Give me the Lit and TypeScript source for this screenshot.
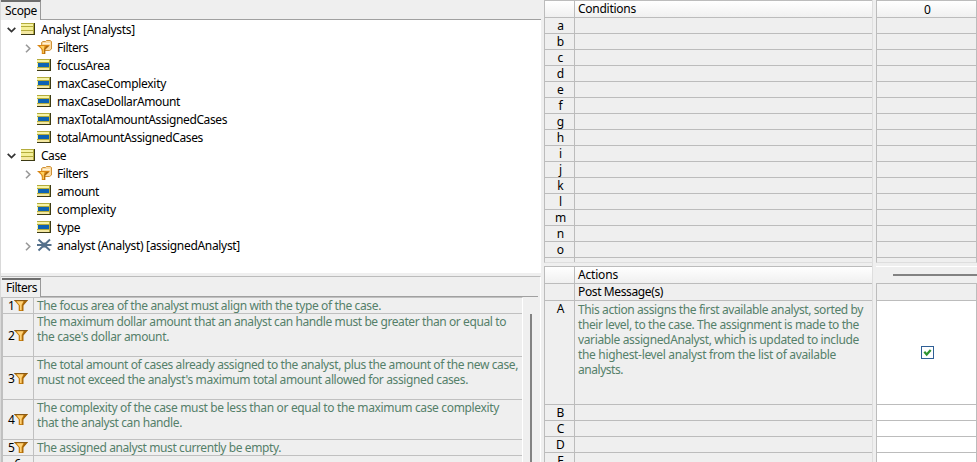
import { LitElement, html, css, svg } from "lit";
import { customElement } from "lit/decorators.js";

type Kind = "entity" | "folder" | "attr" | "assoc";
interface Node { label: string; kind: Kind; level: number; state?: "open" | "closed"; w: number }

const TREE: Node[] = [
  { label: "Analyst [Analysts]", kind: "entity", level: 0, state: "open", w: 94 },
  { label: "Filters", kind: "folder", level: 1, state: "closed", w: 31 },
  { label: "focusArea", kind: "attr", level: 1, w: 53 },
  { label: "maxCaseComplexity", kind: "attr", level: 1, w: 109 },
  { label: "maxCaseDollarAmount", kind: "attr", level: 1, w: 123 },
  { label: "maxTotalAmountAssignedCases", kind: "attr", level: 1, w: 170 },
  { label: "totalAmountAssignedCases", kind: "attr", level: 1, w: 146 },
  { label: "Case", kind: "entity", level: 0, state: "open", w: 25 },
  { label: "Filters", kind: "folder", level: 1, state: "closed", w: 31 },
  { label: "amount", kind: "attr", level: 1, w: 42 },
  { label: "complexity", kind: "attr", level: 1, w: 59 },
  { label: "type", kind: "attr", level: 1, w: 23 },
  { label: "analyst (Analyst) [assignedAnalyst]", kind: "assoc", level: 1, state: "closed", w: 183 },
];

type Line = [string, number];
const FILTERS: { h: number; lines: Line[] }[] = [
  { h: 16, lines: [["The focus area of the analyst must align with the type of the case.", 344]] },
  { h: 43, lines: [["The maximum dollar amount that an analyst can handle must be greater than or equal to", 469], ["the case's dollar amount.", 132]] },
  { h: 43, lines: [["The total amount of cases already assigned to the analyst, plus the amount of the new case,", 481], ["must not exceed the analyst's maximum total amount allowed for assigned cases.", 431]] },
  { h: 40, lines: [["The complexity of the case must be less than or equal to the maximum case complexity", 462], ["that the analyst can handle.", 145]] },
  { h: 16, lines: [["The assigned analyst must currently be empty.", 244]] },
];

const ACTION: Line[] = [
  ["This action assigns the first available analyst, sorted by", 285],
  ["their level, to the case. The assignment is made to the", 281],
  ["variable assignedAnalyst, which is updated to include", 281],
  ["the highest-level analyst from the list of available", 258],
  ["analysts.", 45],
];

const fit = (label: string, w: number) => html`<span class="fit" data-width=${w}>${label}</span>`;

const funnel = svg`
  <path d="M0 0H14L9.3 5.5V11H4.7V5.5Z" fill="#c9800f"/>
  <path d="M0 0H14L13 1.2H1Z" fill="#8a5a14"/>
  <path d="M2.5 1.2H9.5L7.6 5V10H6V5.5Z" fill="#ffd278"/>
  <path d="M10.5 1.2H13L9.3 5.5V11H8.3V5Z" fill="#a3650c"/>`;

@customElement("tree-icon")
class TreeIcon extends LitElement {
  static properties = { kind: { type: String } };
  declare kind: Kind;
  static styles = css`:host { display: block; width: 16px; height: 16px; } svg { display: block; }`;
  render() {
    const box = this.kind === "attr" || this.kind === "entity";
    const body = this.kind === "folder"
      ? svg`<path d="M4.5 3.5L6 2.5H8.5L9.5 1.5H13L14.5 2.5V10L12.5 11.5H5Z" fill="#fbd9a0" stroke="#cf9238"/>
          <path d="M6 4.5H13" stroke="#fff3d6"/>
          <path d="M0 6H13L8.2 10.5V15H4.8V10.5Z" fill="#d98512"/>
          <path d="M3 7H7.5L6.8 10.5V14H5.8V10.5Z" fill="#ffd060"/>
          <path d="M9.5 7H12L8.2 10.5V15H7.3V10Z" fill="#a8660c"/>`
      : this.kind === "assoc"
      ? svg`<path d="M1.5 2.5L13 13.5M13 2.5L1.5 13.5M0 8H14.5" stroke="#55718c" stroke-width="1.9" fill="none"/><circle cx="7.3" cy="8" r="2.6" fill="#55718c"/>`
      : svg`<rect x="0" y="2" width="14" height="12" fill="#3c3a14"/>
          <rect x="0" y="2" width="13" height="11" fill="#b4ac3c"/>
          <rect x="0" y="3" width="12" height="2" fill="#f6f3a6"/>
          ${this.kind === "attr"
            ? svg`<rect x="0" y="6" width="12" height="4" fill="#f6f3a6"/><rect x="1" y="6" width="11" height="4" fill="#0c62b4"/><rect x="0" y="11" width="12" height="2" fill="#f4e8a2"/>`
            : svg`<rect x="0" y="6" width="12" height="3" fill="#f4ef98"/><rect x="0" y="10" width="12" height="3" fill="#f4e8a2"/>`}`;
    return html`<svg width="16" height="16" shape-rendering=${box ? "crispEdges" : "auto"}>${body}</svg>`;
  }
}

@customElement("app-root")
class AppRoot extends LitElement {
  static styles = css`
    :host { display: grid; grid-template-columns: 544px 332px 101px; width: 977px; height: 462px; overflow: hidden;
      background: #efefef; font: 12px/15px "Noto Sans", "Open Sans", sans-serif; color: #000; }
    * { box-sizing: border-box; }
    .fit { display: inline-block; white-space: pre; }
    .left { display: grid; grid-template-rows: 20px 253px 3px 186px; border-left: 1px solid #d9d9d9; width: 541px; height: 462px; overflow: hidden; }
    .tabs { display: flex; height: 20px; }
    .tab { width: 40px; height: 20px; border-top: 2px solid #6e6e6e; border-right: 1px solid #999; padding: 1px 0 0 4px; }
    .rest { flex: 1; border-bottom: 1px solid #a0a0a0; }
    .tree { background: #fff; }
    .node { display: flex; height: 18px; align-items: center; }
    .node .arrow { width: 20px; display: flex; justify-content: center; padding: 2px 0 0 1px; }
    .node.child { padding-left: 16px; }
    .node tree-icon { width: 20px; }
    .filters { border-top: 1px solid #bcbcbc; border-right: 1px solid #fff; padding-top: 1px; overflow: hidden; }
    .filters .tabs { height: 19px; }
    .filters .tab { height: 19px; margin-left: 1px; width: 39px; padding: 0 0 0 4px; }
    .filters .rest { margin-right: 2px; }
    .body { display: flex; }
    .list { width: 522px; border-left: 2px solid #c0c0c0; border-right: 1px solid #fff; height: 165px; overflow: hidden; border-top: 1px solid #c0c0c0; }
    .frow { display: flex; border-bottom: 1px solid #c0c0c0; }
    .num { width: 31px; border-right: 1px solid #c0c0c0; display: flex; align-items: center; padding-left: 5px; }
    .num span { width: 6px; }
    .txt { padding: 1px 0 0 3px; color: #55806a; line-height: 15px; white-space: nowrap; }
    .frow .txt { margin-top: -1px; }
    .line { display: block; height: 15px; }
    .thumb { width: 2px; background: #828282; margin: 17px 0 0 7px; height: 150px; }
    .mid, .right { display: grid; grid-template-rows: 263px 3px 196px; height: 462px; overflow: hidden; }
    .mid { width: 329px; border-right: 1px solid #dedede; }
    .pane { border-top: 1px solid #bcbcbc; border-left: 1px solid #bcbcbc; overflow: hidden; }
    .conditions { border-bottom: 1px solid #dedede; }
    .lower { grid-row: 3; }
    .row { display: flex; height: 16px; border-bottom: 1px solid #bcbcbc; }
    .row.head { height: 17px; background: linear-gradient(#fff, #f0f0f0); }
    .row.tall { height: 17px; }
    .row.action { height: 104px; }
    .key { width: 30px; border-right: 1px solid #bcbcbc; text-align: center; padding-left: 2px; line-height: 16px; }
    .label { padding-left: 3px; line-height: 16px; }
    .right .pane { border-right: 1px solid #bcbcbc; }
    .right .row { justify-content: center; align-items: center; padding-left: 2px; }
    .right .lower.pane { border: 0; border-top: 1px solid #fff; }
    .scroll { height: 16px; display: flex; align-items: center; justify-content: flex-end; }
    .scroll i { width: 84px; height: 2px; background: #828282; }
    .values { border: 1px solid #bcbcbc; border-bottom: 0; }
    .white { background: #fff; }
    svg { display: block; }
  `;

  async firstUpdated() {
    await document.fonts.ready;
    this.renderRoot.querySelectorAll<HTMLElement>(".fit").forEach((el) => {
      const target = Number(el.dataset.width);
      el.style.letterSpacing = `${(target - el.getBoundingClientRect().width) / (el.textContent ?? "").length}px`;
    });
  }

  node(n: Node) {
    return html`<div class="node ${n.level ? "child" : ""}">
      <div class="arrow">${n.state === "open"
        ? html`<svg width="9" height="6"><path d="M0.7 0.8L4.5 4.5L8.3 0.8" fill="none" stroke="#333" stroke-width="1.7"/></svg>`
        : n.state === "closed"
        ? html`<svg width="6" height="9"><path d="M1 0.7L4.8 4.5L1 8.3" fill="none" stroke="#999" stroke-width="1.6"/></svg>` : ""}</div>
      <tree-icon .kind=${n.kind}></tree-icon>${fit(n.label, n.w)}
    </div>`;
  }

  render() {
    const conditions = "abcdefghijklmno".split("");
    return html`
      <div class="left">
        <div class="tabs"><div class="tab">${fit("Scope", 32)}</div><div class="rest"></div></div>
        <div class="tree">${TREE.map((n) => this.node(n))}</div>
        <div></div>
        <div class="filters">
          <div class="tabs"><div class="tab">${fit("Filters", 31)}</div><div class="rest"></div></div>
          <div class="body">
            <div class="list">
              ${FILTERS.map((f, i) => html`<div class="frow" style="height:${f.h}px">
                <div class="num"><span>${i + 1}</span><svg width="14" height="11">${funnel}</svg></div>
                <div class="txt">${f.lines.map(([t, w]) => html`<div class="line">${fit(t, w)}</div>`)}</div>
              </div>`)}
              <div class="frow" style="height:16px"><div class="num">&nbsp;&nbsp;6</div></div>
            </div>
            <div class="thumb"></div>
          </div>
        </div>
      </div>
      <div class="mid">
        <div class="pane conditions">
          <div class="row head"><div class="key"></div><div class="label">${fit("Conditions", 58)}</div></div>
          ${[...conditions, ""].map((c) => html`<div class="row"><div class="key">${c}</div></div>`)}
        </div>
        <div class="pane lower">
          <div class="row head"><div class="key"></div><div class="label">${fit("Actions", 40)}</div></div>
          <div class="row tall"><div class="key"></div><div class="label">${fit("Post Message(s)", 85)}</div></div>
          <div class="row action"><div class="key">A</div><div class="txt">${ACTION.map(([t, w]) => html`<div class="line">${fit(t, w)}</div>`)}</div></div>
          ${["B", "C", "D", "E"].map((c) => html`<div class="row"><div class="key">${c}</div></div>`)}
        </div>
      </div>
      <div class="right">
        <div class="pane conditions">
          <div class="row head">0</div>
          ${[...conditions, ""].map(() => html`<div class="row"></div>`)}
        </div>
        <div class="pane lower">
          <div class="scroll"><i></i></div>
          <div class="values">
            <div class="row tall"></div>
            <div class="row action white"><svg width="13" height="13"><rect x=".5" y=".5" width="12" height="12" fill="#fff" stroke="#2f5f96"/><path d="M3.3 5.8L5.7 8.5L9.7 4" fill="none" stroke="#2f9430" stroke-width="2.2"/></svg></div>
            ${[1, 2, 3, 4].map(() => html`<div class="row white"></div>`)}
          </div>
        </div>
      </div>`;
  }
}
